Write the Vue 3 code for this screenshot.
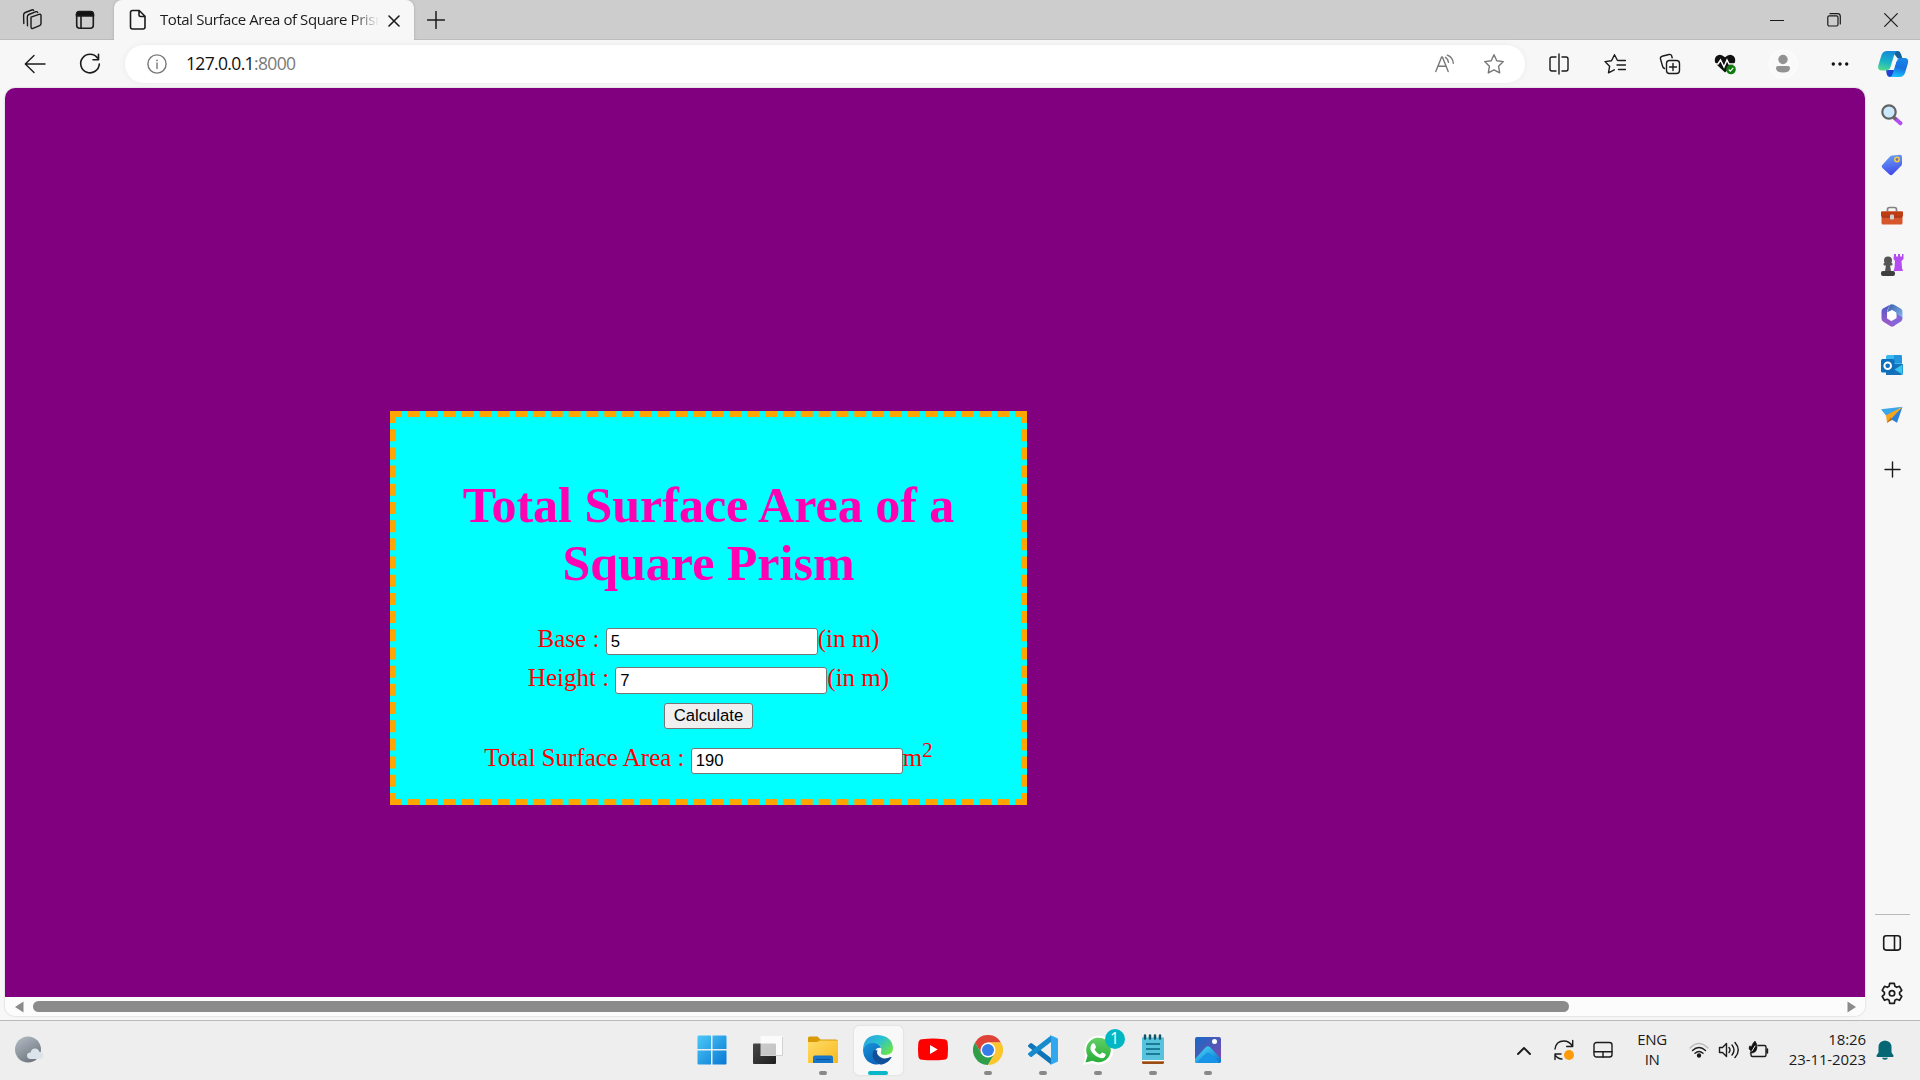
<script setup>
import { ref } from 'vue'

const base = ref('5')
const height = ref('7')
const area = ref('190')

function calculate() {
  const b = Number(base.value)
  const h = Number(height.value)
  area.value = String(2 * b * b + 4 * b * h)
}
</script>

<template>
  <div class="screen">
    <header class="tabs">
      <svg class="ic workspaces" width="24" height="24" viewBox="0 0 24 24"><path d="M10 9.2 18 6.4q2-.6 2 1.2v8q0 1.500-1.400 2l-6.600 2.700q-2 .6-2-1.200zM6.500 17.800 6.300 9q0-1.800 1.600-2.500L15 3.700q1.200-.4 1.700.8M2.800 15.500 2.600 7q0-1.800 1.600-2.500L10.800 2q1.300-.5 1.900.5" /></svg>
      <svg class="ic tabaction" width="20" height="20" viewBox="0 0 20 20"><rect x="1.700" y="1.700" width="16.600" height="16.600" rx="3" /><path d="M6 6v12" /><path class="solid" d="M1.500 6V4.500q0-3 3-3h11q3 0 3 3V6z" /></svg>
      <div class="tab">
        <svg class="ic page-icon" width="18" height="22" viewBox="0 0 18 22"><path d="M3.500 1.500h6.700l5.800 5.800v10.700q0 2-2 2H3.500q-2 0-2-2v-14.500q0-2 2-2zM10 1.500v4.500q0 1.500 1.500 1.500H16" /></svg>
        <span class="tab-title">Total Surface Area of Square Prism</span>
        <svg class="ic close-tab" width="12" height="12" viewBox="0 0 12 12"><path d="m1 1 10 10M11 1 1 11" /></svg>
      </div>
      <svg class="ic newtab" width="18" height="18" viewBox="0 0 18 18"><path d="M9 .5v17M.5 9h17" /></svg>
      <div class="winctl">
        <svg class="ic thin" width="14" height="14" viewBox="0 0 14 14"><path d="M.5 7.500h13" /></svg>
        <svg class="ic thin" width="14" height="14" viewBox="0 0 14 14"><rect x=".8" y="2.800" width="10.200" height="10.200" rx="1.500" /><path d="M3 .7h7.500q2.800 0 2.800 2.800V11" /></svg>
        <svg class="ic thin" width="14" height="14" viewBox="0 0 14 14"><path d="m.7.700 12.600 12.600M13.300.7.700 13.300" /></svg>
      </div>
    </header>

    <nav class="toolbar">
      <svg class="ic back" width="24" height="24" viewBox="0 0 24 24"><path d="M22 12H2.500M11 3.500 2.300 12l8.700 8.500" /></svg>
      <svg class="ic reload" width="24" height="24" viewBox="0 0 24 24"><path d="M19.500 6A9.300 9.300 0 1 0 21.300 12M20.500 2.200v5.600H15" /></svg>
      <div class="omnibox">
        <svg class="ic gray info" width="20" height="20" viewBox="0 0 20 20"><circle cx="10" cy="10" r="9.100" /><path d="M10 9v5.500" /><circle class="gray-fill" cx="10" cy="6.300" r=".9" /></svg>
        <span class="url">127.0.0.1<i>:8000</i></span>
        <svg class="ic gray read" width="20" height="20" viewBox="0 0 20 20"><path d="M.8 17.500 6.600 3h.8l5.800 14.500M3 12.300h8M10.500 3.300q2.500 1.500 3 5M12.300 1.200q5.500 2 6 8" /></svg>
        <svg class="ic gray star" width="22" height="22" viewBox="0 0 22 22"><path d="m11 1.700 2.800 6 6.500.9-4.700 4.700 1.100 6.600-5.700-3.100-5.700 3.100 1.100-6.600-4.700-4.700 6.500-.9z" /></svg>
      </div>
      <svg class="ic split" width="22" height="22" viewBox="0 0 22 22"><path d="M8 4H4Q2 4 2 6v10q0 2 2 2h4M14 4h4q2 0 2 2v10q0 2-2 2h-4M11 1v20" /></svg>
      <svg class="ic favs" width="22" height="22" viewBox="0 0 22 22"><path d="M13.500 7.500 10.500 1.700l-3 6-6.500.9L5.600 13.300 4.500 19.800l5.800-3M14.500 7.500h7M13 12h8.500M14.500 16.500h7" /></svg>
      <svg class="ic coll" width="22" height="22" viewBox="0 0 22 22"><rect x="7.500" y="7.500" width="13" height="13" rx="3" /><path d="M14 10.500v7M10.500 14h7M5.500 15.500Q4 15 3.500 13L1.500 6Q1 4 3 3.300L10 1.500q2-.5 2.600 1.300l.6 2" /></svg>
      <svg class="health" width="23" height="22" viewBox="0 0 23 22"><path d="M11 19.500 2 11Q-.5 7 2 3.500 6-.5 11 4.200 16-.5 20 3.500q2.500 3.500 0 7.500z" fill="#111" /><path d="M0 11h4l2.500-4 3.500 7 3-7 2 4h6" fill="none" stroke="#fff" stroke-width="1.500" /><circle cx="17" cy="16.500" r="4.800" fill="#107c10" /><path d="m14.800 16.700 1.500 1.500 3-3.300" fill="none" stroke="#fff" stroke-width="1.200" /></svg>
      <svg class="avatar" width="30" height="30" viewBox="0 0 30 30"><circle cx="15" cy="15" r="14" fill="#f9f9f9" stroke="#fff" /><circle cx="15" cy="10.500" r="4.700" fill="#929292" /><path d="M8 19q0-2 2-2h10q2 0 2 2 0 4.500-7 4.500T8 19z" fill="#929292" /></svg>
      <svg class="dots" width="18" height="6" viewBox="0 0 18 6"><circle cx="2.300" cy="3" r="1.700" /><circle cx="9" cy="3" r="1.700" /><circle cx="15.700" cy="3" r="1.700" /></svg>
      <svg class="copilot" width="32" height="28" viewBox="0 0 32 28">
        <defs>
          <linearGradient id="cp1" x1=".4" y1="0" x2=".2" y2="1"><stop stop-color="#168bd8" /><stop offset=".55" stop-color="#19b5c5" /><stop offset="1" stop-color="#56db8b" /></linearGradient>
          <linearGradient id="cp2" x1=".6" y1="0" x2=".4" y2="1"><stop stop-color="#1687e6" /><stop offset=".5" stop-color="#1671e0" /><stop offset="1" stop-color="#1bc0fb" /></linearGradient>
        </defs>
        <path d="M15 1h6q2 0 3 3l1.300 4h-5z" fill="#14609b" />
        <path d="M9 20h9l-2 5.500Q15 27 13 27q-2.500 0-3.300-3z" fill="#1b45d2" />
        <path d="M10 1h10q-2 1-3 4.500L13.500 17q-1 3.500-4 3.500H5q-4.700 0-3.700-5L4.500 5Q6 1 10 1z" fill="url(#cp1)" />
        <path d="M22 8h5.500q4.500 0 3.500 5l-3 10q-1.500 4-5.500 4H13q2-.5 3-4l3-11q1-4 3-4z" fill="url(#cp2)" />
        <path d="M17 9.500h5q-2.500.5-3.300 4l-1 3q-1 3.500-4 3.500h-3q3-.5 4-3.500l1-4q.6-3 1.300-3z" fill="#f7f7f7" />
      </svg>
    </nav>

    <div class="body">
      <main class="viewport">
        <div class="document">
          <section class="card">
            <h1>Total Surface Area of a<br />Square Prism</h1>
            <div class="row"><label>Base :</label><input v-model="base" /><span>(in m)</span></div>
            <div class="row second"><label>Height :</label><input v-model="height" /><span>(in m)</span></div>
            <button @click="calculate">Calculate</button>
            <div class="row result"><label>Total Surface Area :</label><input v-model="area" /><span>m<sup>2</sup></span></div>
          </section>
        </div>
        <div class="scrollbar">
          <svg width="9" height="12" viewBox="0 0 9 12"><path d="M8.500.5v11L0 6z" /></svg>
          <div class="thumb"></div>
          <svg width="9" height="12" viewBox="0 0 9 12"><path d="M.5.500v11L9 6z" /></svg>
        </div>
      </main>

      <aside class="side">
        <svg width="24" height="24" viewBox="0 0 24 24"><path d="m14.500 15 6 5.300" stroke="#b34cf2" stroke-width="4" stroke-linecap="round" /><path d="m13 13.500 3 3" stroke="#666" stroke-width="2.500" /><circle cx="9" cy="9" r="6.700" fill="#cbe9fb" stroke="#646464" stroke-width="2.200" /></svg>
        <svg width="24" height="24" viewBox="0 0 24 24">
          <defs><linearGradient id="tg" x1=".3" y1="0" x2=".5" y2="1"><stop stop-color="#68a2f5" /><stop offset="1" stop-color="#4146ea" /></linearGradient></defs>
          <path d="M12 2.500 20 1.800q2 0 2 2V11q0 1-1 2L12.500 21.500q-1.500 1.500-3 0l-7-6.500q-1.800-1.700 0-3.200L9.500 4q1-1.300 2.500-1.500z" fill="url(#tg)" /><circle cx="17" cy="6.500" r="2.200" fill="#7770b8" stroke="#f7cf3c" stroke-width="1.500" /></svg>
        <svg width="24" height="24" viewBox="0 -1.500 24 24"><path d="M7.500 7V5q0-2 2-2h5q2 0 2 2v2" fill="none" stroke="#828282" stroke-width="1.700" /><rect x="1.500" y="7" width="21" height="13" rx="1.500" fill="#d5572b" /><path d="M1 7h22v5H1z" fill="#bd3c12" /><path d="M2 12.500h20" stroke="#8e2b13" /><rect x="10" y="10" width="4" height="5" rx="1.300" fill="#d1d1d1" /></svg>
        <svg width="24" height="24" viewBox="0 0 24 24"><path d="M14 1h2v2.500h2V1h2v2.500h2V1h1.500v5L21.500 8l.5 7 1 3h-9.500l1-3 .5-7L13.500 6z" fill="#b54cf1" /><g fill="#555"><circle cx="8" cy="7.500" r="4" /><rect x="3.500" y="10" width="9" height="2.500" rx="1" /><path d="M6 12h4l1 6H5z" /><rect x="1" y="18" width="14" height="5" rx="2" fill="#3f3f3f" /></g></svg>
        <svg width="24" height="24" viewBox="0 0 24 24">
          <defs>
            <linearGradient id="ma" x1="0" y1="0" x2="1" y2="1"><stop stop-color="#355aa8" /><stop offset="1" stop-color="#8bbdf4" /></linearGradient>
            <linearGradient id="mb" x1="0" y1="0" x2="0" y2="1"><stop stop-color="#4a5bc7" /><stop offset="1" stop-color="#a85ac9" /></linearGradient>
          </defs>
          <path d="M10 1.800q2-1.300 4 0l7 4q1.500 1 1.500 3v6L17 16l-1-6.500-4-2.300-5 2z" fill="url(#ma)" />
          <path d="M10 1.800 7 8v7.500l5 3 3 4-1.500.800q-1.500.7-3 0L3 18.500q-1.500-1-1.500-3v-7q0-2 1.500-3z" fill="url(#mb)" />
          <path d="m17 11 5.500 3.500q0 3-1.500 4l-7 4.300q-3 0-4.500-3l2.500-2 4.500-2.500z" fill="#8565d7" /><path d="M8 9.500 12 7l4.200 2.500v5L12 17l-4-2.500z" fill="#fff" /></svg>
        <svg width="24" height="24" viewBox="0 0 24 24"><rect x="6" y="2" width="16" height="16" rx="1.500" fill="#38b8ee" /><path d="M14 2h6.500Q22 2 22 3.500V10h-8z" fill="#2296dc" /><path d="M6 11h17v9q0 2-2 2H6z" fill="#1773b9" /><path d="m22.500 11.500-8 5 8 5z" fill="#38c4ee" /><rect x="1" y="6" width="13.500" height="13.500" rx="1.500" fill="#0f6fbd" /><circle cx="7.700" cy="12.700" r="3.300" fill="none" stroke="#fff" stroke-width="2" /></svg>
        <svg width="24" height="24" viewBox="0 -.7 24 24"><path d="M1 5.500 22.500 3 7 13z" fill="#39a7ea" /><path d="m10 15 12.500-12L17 19z" fill="#2880db" /><path d="M22.500 3 6 11.500l1 8z" fill="#f5a51d" /><path d="m7 19 3.500-5 2 2z" fill="#bc6d10" /></svg>
        <svg class="ic plus" width="24" height="24" viewBox="0 0 24 24"><path d="M12.500 5v15M5 12.500h15" /></svg>
        <div class="spacer"></div>
        <hr />
        <svg class="ic panel" width="20" height="18" viewBox="0 0 20 18"><rect x="1.700" y="1.700" width="16.600" height="14.400" rx="2.500" /><path d="M12.500 2v14" /></svg>
        <svg class="ic gear" width="24" height="24" viewBox="0 0 24 24"><path d="M9.700 2.300h4.600l.6 3 1.800 1 2.800-1 2.300 4-2.200 2v2l2.200 2-2.300 4-2.800-1-1.800 1-.6 3H9.700l-.6-3-1.800-1-2.800 1-2.300-4 2.200-2v-2l-2.200-2 2.300-4 2.800 1 1.800-1z" /><circle cx="12" cy="12.300" r="2.700" /></svg>
      </aside>
    </div>

    <footer class="taskbar">
      <svg class="weather" width="30" height="28" viewBox="0 0 30 28">
        <defs><linearGradient id="moon" x1="0" y1="0" x2=".6" y2="1"><stop stop-color="#b5bfc9" /><stop offset="1" stop-color="#70777e" /></linearGradient></defs>
        <circle cx="13" cy="13.500" r="13" fill="url(#moon)" /><path d="M15 23q-3-.5-3-3.500t3.500-3q1-4 4.500-4t4.500 3.500q4 0 4 3.500T25 23z" fill="#dce4eb" />
      </svg>

      <div class="apps">
        <div class="app start"><svg width="30" height="30" viewBox="0 0 30 30"><defs><linearGradient id="wi" x1="0" y1="0" x2="1" y2="1"><stop stop-color="#4cc9f8" /><stop offset="1" stop-color="#0877d4" /></linearGradient></defs><path d="M.500 1.500q0-1 1-1H14V14H.5zM15.500.5h13q1 0 1 1V14h-14zM.5 15.500H14v14H1.500q-1 0-1-1zM15.500 15.500h14v13q0 1-1 1h-13z" fill="url(#wi)" /></svg></div>
        <div class="app"><svg width="30" height="30" viewBox="0 0 30 30"><defs><linearGradient id="tv" x1="0" y1="0" x2="1" y2="1"><stop stop-color="#484848" /><stop offset="1" stop-color="#1e1e1e" /></linearGradient></defs><rect x="0" y="8.500" width="23" height="20.500" rx="1" fill="url(#tv)" /><rect x="7.500" y="1" width="22" height="20" rx="1" fill="#fff" opacity=".73" /><path d="M7.500 20.500h22V2" fill="none" stroke="#d1d1d1" /></svg></div>
        <div class="app"><svg width="30" height="30" viewBox="0 0 30 30"><defs><linearGradient id="fo" x1="0" y1="0" x2="1" y2="1"><stop stop-color="#ffdc6a" /><stop offset="1" stop-color="#f8b91c" /></linearGradient></defs><path d="M0 3q0-1.500 1.500-1.500h8l3 3H28q2 0 2 2V10H0z" fill="#d99a08" /><path d="M0 7h9l3-1.500h18V28H0z" fill="url(#fo)" /><path d="M5 28v-5.500q0-2 2-2h16q2 0 2 2V28z" fill="#1475c9" /><path d="M8 24.500h14" stroke="#0c559d" /></svg><b></b></div>
        <div class="app active"><svg width="32" height="32" viewBox="0 0 32 32">
          <defs><linearGradient id="eg" x1="0" y1="0" x2="1" y2=".7"><stop stop-color="#2c9de2" /><stop offset=".5" stop-color="#28c0d3" /><stop offset="1" stop-color="#68e34c" /></linearGradient><linearGradient id="eb" x1="0" y1="0" x2=".5" y2="1"><stop stop-color="#1993d8" /><stop offset="1" stop-color="#0b65bb" /></linearGradient></defs>
          <path d="M1 15Q2 1 16 1q14 1 15 13 0 7-8 7-5 0-4-3 2-8-8-8Q4 10 1 15z" fill="url(#eg)" />
          <path d="M1 15q3-6 9-6 7 0 9 5-5-1-6 4-1 7 7 11-3 2-7 1.500Q1 28 1 15z" fill="url(#eb)" />
          <path d="M12 16q-5 9 7 14.700 7-1 10.500-7.200.3-.8-.8-.5Q20 27 15.300 20q-.8-1.300.2-3.500z" fill="#124f99" />
        </svg><b></b></div>
        <div class="app"><svg width="32" height="32" viewBox="0 0 32 32"><path d="M5 5.200q11-1.200 22 0 3.500.3 3.700 4 .7 6 0 12.500-.3 3.800-3.700 4-11 1.200-22 0-3.400-.2-3.700-4-.7-6.500 0-12.500.3-3.700 3.700-4z" fill="#f00" /><path d="m13 11 7.700 4.500L13 20z" fill="#fff" /></svg></div>
        <div class="app"><svg width="30" height="30" viewBox="0 0 30 30"><path d="M2 7.500A15 15 0 0 1 28 7.500H15L8.500 18.800z" fill="#df4237" /><path d="M2 7.500A15 15 0 0 0 15 30l6.500-11.300H8.500z" fill="#2f9e4b" /><path d="M28 7.500A15 15 0 0 1 15 30l6.500-11.300L15 7.500z" fill="#fbc62d" /><circle cx="15" cy="15" r="7.500" fill="#fff" /><circle cx="15" cy="15" r="6" fill="#357de8" /></svg><b></b></div>
        <div class="app"><svg width="32" height="32" viewBox="0 0 32 32"><path d="m1 11.500 2-2q1-1 2.200 0L24 24v6.500L1.500 13q-.8-.7-.5-1.500z" fill="#1075b8" /><path d="m1 20.500 2 2q1 1 2.200 0L24 8V1.500L1.500 19q-.8.7-.5 1.500z" fill="#168bce" /><path d="m23 1 7 3q1 .5 1 1.500v21q0 1-1 1.500l-7 3q1-1 1-3V4q0-2-1-3z" fill="#31a7ef" /></svg><b></b></div>
        <div class="app wa"><svg width="34" height="34" viewBox="0 0 34 34"><defs><linearGradient id="wa" x1="0" y1="0" x2="0" y2="1"><stop stop-color="#63cf65" /><stop offset="1" stop-color="#27ad39" /></linearGradient></defs><path d="m2 32 2.500-9A14.500 14.500 0 1 1 11 30z" fill="#fff" /><path d="m4.500 29.500 2-7A12.300 12.300 0 1 1 11.500 27.700z" fill="url(#wa)" /><path d="M10.500 11.500q2-2.500 3.500 0l1 2.500q.3.800-1.500 2.500 2 3.500 5.500 5 2-2.300 2.600-2l2.900 1.500q1 1-1 3.300-2 1.500-5 .5-7-2.500-9-8.300-.5-2.500 1-5z" fill="#fff" /></svg><span class="badge">1</span><b></b></div>
        <div class="app"><svg width="32" height="32" viewBox="0 0 32 32"><path d="M5 3.500h22V26H5z" fill="#57c2dc" /><path d="M5 27h22v1.500q0 1.500-1.500 1.500h-19Q5 30 5 28.500z" fill="#9a4c13" /><path d="M5 26h22v1.300H5z" fill="#fff" /><path d="M9 10h14M9 15h14M9 20h14" stroke="#076480" stroke-width="1.700" /><path d="M8 1.500v3M13 1.500v3M18 1.500v3M23 1.500v3" stroke="#135466" stroke-width="2.500" stroke-linecap="round" /></svg><b></b></div>
        <div class="app"><svg width="26" height="26" viewBox="0 0 26 26"><defs><linearGradient id="ph" x1="0" y1="0" x2="1" y2="1"><stop stop-color="#1769c4" /><stop offset="1" stop-color="#8448ac" /></linearGradient><linearGradient id="pm" x1="0" y1="0" x2="1" y2="1"><stop stop-color="#4be1fc" /><stop offset="1" stop-color="#0870c9" /></linearGradient></defs><rect width="26" height="26" rx="2" fill="url(#ph)" /><path d="M0 22 10.500 10.500q2.500-2.500 5 0L26 22v2q0 2-2 2H2q-2 0-2-2z" fill="url(#pm)" /><path d="m2 25 9-8.500q2-1.700 4 0l9 8.500-1 1H3z" fill="#1793e7" /><circle cx="19.500" cy="4.500" r="2.500" fill="#fff" /></svg><b></b></div>
      </div>

      <div class="tray">
        <svg class="ic chev" width="14" height="9" viewBox="0 0 14 9"><path d="m1 8 6-6 6 6" /></svg>
        <svg class="ic sync" width="22" height="22" viewBox="0 0 22 22"><path d="M2 10Q3 2 11 2q5 0 8.500 5M19.700 1.500v6h-6M9 20Q5 20 2 16M2 20.500v-5.500h6" /><circle cx="16" cy="16" r="5" fill="#ff9a0a" stroke="none" /></svg>
        <svg class="ic pad" width="20" height="18" viewBox="0 0 20 18"><rect x="1" y="1.500" width="18" height="14.500" rx="2.500" /><path d="M1 10.800h18M10 11v5" /></svg>
        <div class="lang">ENG<br />IN</div>
        <svg class="ic wifi" width="20" height="16" viewBox="0 0 20 16"><path class="dim" d="M1 6q9-9 18 0" /><path d="M3.500 8.500q6.500-6 13 0M6 11.300q4-3.600 8 0" /><circle class="solid" cx="10" cy="13.500" r="1.500" /></svg>
        <svg class="ic vol" width="22" height="18" viewBox="0 0 22 18"><path d="M1.500 6.500h3l4-4v13l-4-4h-3zM11 6.500q2 2.500 0 5M14 4q4 5 0 10M17 1.500q6.500 7.500 0 15" /></svg>
        <svg class="ic bat" width="22" height="18" viewBox="0 0 22 18"><path d="M10 4.500h6.500q1.500 0 1.500 1.500v8q0 1.500-1.500 1.500H4.500Q3 15.500 3 14v-1M19.500 8v4" /><path class="solid sprig" d="M7 0q2.500 3 2 6.500Q9 10 6 11.500l-4 1 1-2.500Q0 8 1.500 5l2 .5Q4.500 2 7 0z" /><path class="leaf" d="m4 10 3-5" /></svg>
        <div class="clock">18:26<br />23-11-2023</div>
        <svg class="bell" width="18" height="20" viewBox="0 0 18 20"><path d="M9 .5q6.500.5 6.500 7v5l2 3q.3 1.500-1 1.500h-15Q.2 17 .5 15.500l2-3v-5Q2.500 1 9 .5zM6 17.800h6Q11.500 19.700 9 19.700T6 17.800z" fill="#046773" /></svg>
      </div>
    </footer>
  </div>
</template>

<style>
body { margin: 0; overflow: hidden; }
</style>

<style scoped>
* { box-sizing: border-box; }
svg { display: block; flex: none; }
.screen { width: 1920px; height: 1080px; display: flex; flex-direction: column; background: #f7f7f7; overflow: hidden; font-family: "Open Sans", "Noto Sans", sans-serif; }
.ic { fill: none; stroke: #1b1b1b; stroke-width: 1.4; stroke-linejoin: round; stroke-linecap: round; }
.solid { fill: #111; }
.gray { stroke: #777; }
.gray-fill { fill: #777; stroke: none; }
.thin { stroke-width: 1.2; }

.tabs { flex: none; height: 40px; display: flex; align-items: center; background: #cdcdcd; border-bottom: 1px solid #bbb; }
.workspaces { margin-left: 21px; }
.tabaction { margin-left: 30px; stroke-width: 1.6; }
.tab { width: 300px; height: 40px; margin-left: 19px; display: flex; align-items: center; background: #f7f7f7; border-radius: 8px 8px 0 0; box-shadow: 0 0 3px #aaa; clip-path: inset(-3px -3px 0 -3px); align-self: flex-start; }
.page-icon { margin-left: 15px; stroke-width: 1.6; }
.tab-title { width: 219px; margin-left: 13px; height: 24px; line-height: 22px; overflow: hidden; white-space: nowrap; font-size: 15px; letter-spacing: -0.42px; color: #1b1b1b; -webkit-mask-image: linear-gradient(90deg, #000 88%, transparent 100%); mask-image: linear-gradient(90deg, #000 88%, transparent 100%); }
.close-tab { margin-left: 9px; margin-top: 1px; stroke-width: 1.6; }
.newtab { margin-left: 13px; stroke-width: 1.5; }
.winctl { margin-left: auto; margin-right: 22px; display: flex; gap: 43px; }

.toolbar { flex: none; height: 48px; display: flex; align-items: center; }
.back { margin-left: 23px; }
.reload { margin-left: 31px; stroke-width: 1.6; }
.omnibox { width: 1400px; height: 38px; margin-left: 23px; display: flex; align-items: center; border-radius: 19px; background: #fff; box-shadow: 0 0 6px #ebebeb; }
.info { margin-left: 22px; }
.url { margin: 0 0 2px 19px; font-size: 17.500px; letter-spacing: -0.65px; color: #111; }
.url i { font-style: normal; color: #7a7a7a; }
.read { margin-left: auto; }
.star { margin-left: 28px; margin-right: 20px; }
.split { margin-left: 23px; }
.favs { margin-left: 34px; }
.coll { margin-left: 33px; }
.health { margin-left: 33px; }
.avatar { margin-left: 31px; }
.dots { margin-left: 33px; fill: #111; }
.copilot { margin-left: 28px; }

.body { flex: none; height: 932px; display: flex; }
.viewport { width: 1860px; height: 928px; margin-left: 5px; border-radius: 10px; overflow: hidden; background: #fff; box-shadow: 0 0 2px #bbb; }
.document { height: 909px; background: #800080; display: flex; align-items: flex-start; }
.card { width: 637px; height: 394px; margin: 323px 0 0 385px; border: 6px dashed orange; background: cyan; display: flex; flex-direction: column; align-items: center; padding-top: 59px; color: red; font: 25px/28px "Liberation Serif", "Times New Roman", serif; }
.card h1 { margin: 0; text-align: center; color: #ff00b2; font-size: 50px; line-height: 58px; white-space: nowrap; }
.row { display: flex; height: 27px; margin-top: 36px; white-space: nowrap; line-height: 21px; }
.row label { margin-right: 6.250px; }
.row input { width: 212px; height: 27px; border: 1px solid #767676; border-radius: 3px; padding: 0 4px; background: #fff; color: #000; font: 16.670px "Liberation Sans", Arial, sans-serif; outline: none; }
.second { margin-top: 12px; }
.card button { width: 89px; height: 26px; margin-top: 9px; padding: 0; flex: none; border: 1px solid #767676; border-radius: 3px; background: #efefef; color: #000; font: 16.670px/22px "Liberation Sans", Arial, sans-serif; }
.result { margin-top: 19px; line-height: 20px; }
.result input { height: 26px; }
.row sup { font-size: 20.800px; line-height: 0; vertical-align: super; }

.scrollbar { height: 19px; display: flex; align-items: center; padding: 0 10px; background: #fcfcfc; }
.scrollbar svg { fill: #8b8b8b; }
.thumb { width: 1536px; height: 11px; margin: 0 278px 0 9px; flex: none; border-radius: 6px; background: #8b8b8b; }

.side { width: 54px; display: flex; flex-direction: column; align-items: center; padding-top: 15px; gap: 26px; }
.spacer { flex: 1; }
.side hr { width: 35px; height: 1px; margin: 0 0 -7px; flex: none; border: 0; background: #bababa; }
.plus { margin-top: 4px; }
.panel { margin-bottom: 3px; stroke-width: 1.6; }
.gear { margin-bottom: 15px; stroke-width: 1.7; }

.taskbar { flex: none; height: 60px; display: flex; border-top: 1px solid #b9b9b9; background: #eee; }
.weather { margin: 15px 0 0 15px; }
.apps { display: flex; margin-left: 639px; }
.app { position: relative; width: 49px; height: 49px; margin: 5px 3px 0; padding-bottom: 1px; display: flex; align-items: center; justify-content: center; border-radius: 5px; }
.start { margin-right: 4.500px; }
.active { background: #f8f8f8; box-shadow: 0 0 2px #ccc; }
.app b { position: absolute; left: 20px; bottom: 0; width: 8px; height: 4px; border-radius: 2px; background: #888; }
.active b { left: 14px; width: 20px; background: #08b8c8; }
.badge { position: absolute; right: -2px; top: 3px; width: 20px; height: 20px; border-radius: 50%; background: #00b7c3; color: #fff; font-size: 16px; line-height: 19px; text-align: center; }
.tray { margin-left: auto; height: 58px; display: flex; align-items: center; font-size: 15px; line-height: 20px; color: #1b1b1b; }
.chev { stroke-width: 1.9; }
.sync { margin-left: 22px; }
.pad { margin-left: 18px; }
.lang { width: 40px; margin: 0 0 2px 19px; text-align: center; letter-spacing: -0.4px; }
.wifi { margin-left: 17px; }
.dim { stroke: #bbb; }
.vol { margin-left: 9px; }
.bat { margin-left: 8px; }
.sprig { stroke-width: .6; }
.leaf { stroke: #eee; stroke-width: 1; }
.clock { width: 90px; margin: 0 0 2px 6px; text-align: right; letter-spacing: -0.1px; white-space: nowrap; }
.bell { margin: 0 26px 0 10px; }
</style>
